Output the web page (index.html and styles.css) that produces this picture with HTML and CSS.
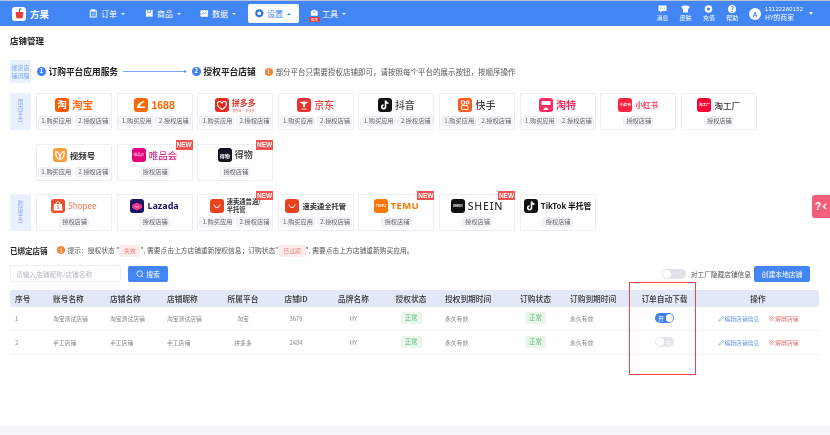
FILE: index.html
```html
<!DOCTYPE html>
<html lang="zh-CN">
<head>
<meta charset="utf-8">
<title>店铺管理</title>
<link rel="stylesheet" href="styles.css">
</head>
<body>
<div class="page">
  <header class="topbar">
    <div class="brand">
      <span class="brand-logo"><svg viewBox="0 0 14 14" width="11" height="11"><path d="M2 5h10l-1 8H3z" fill="#e8413c"/><path d="M7 5V1.500h2.500" fill="none" stroke="#2e9b4f" stroke-width="1.500"/></svg></span>
      <span class="brand-name">方果</span>
    </div>
    <nav class="nav">
      <a class="nav-item n1"><svg class="nav-ico" viewBox="0 0 10 10"><path d="M1.500 2h7v7.500h-7z" fill="none" stroke="#fff" stroke-width="1.200"/><path d="M3 .5h4v2H3zM3.200 5h3.600M3.200 7h3.600" fill="#fff" stroke="#fff" stroke-width=".8"/></svg>订单<i class="caret"></i></a>
      <a class="nav-item n2"><svg class="nav-ico" viewBox="0 0 10 10"><path d="M1 1h8v8H1z" fill="#fff"/><path d="M3.200 1v3h3.600V1" fill="none" stroke="#4285f4" stroke-width=".9"/></svg>商品<i class="caret"></i></a>
      <a class="nav-item n3"><svg class="nav-ico" viewBox="0 0 10 10"><rect x=".5" y="1.500" width="9" height="7.500" rx="1" fill="#fff"/><path d="M2 6.500l2-2 1.500 1L8 3.200" fill="none" stroke="#4285f4" stroke-width=".9"/></svg>数据<i class="caret"></i></a>
      <a class="nav-item active"><svg class="nav-ico" viewBox="0 0 10 10"><circle cx="5" cy="5" r="3.300" fill="none" stroke="#2f6fd8" stroke-width="2.200"/><circle cx="5" cy="5" r="4.600" fill="none" stroke="#2f6fd8" stroke-width=".9" stroke-dasharray="1.500 .9"/></svg>设置<i class="caret up"></i></a>
      <a class="nav-item n5"><span class="tool-ico"><svg class="nav-ico" viewBox="0 0 10 10"><path d="M5 .5L9 2.500V8H1V2.500z" fill="#fff"/><path d="M3.500 3.500h3" stroke="#4285f4" stroke-width=".9"/></svg><b class="tool-badge">限免</b></span>工具<i class="caret"></i></a>
    </nav>
    <div class="top-actions">
      <a class="act"><svg viewBox="0 0 10 9" class="act-ico"><path d="M.5.500h9v6.300H4.500L2.500 8.800V6.800h-2z" fill="#fff"/><path d="M2.500 3.500h5" stroke="#4285f4" stroke-dasharray="1 1"/></svg>消息</a>
      <a class="act"><svg viewBox="0 0 10 9" class="act-ico"><path d="M3 .5h4l2.800 1.600-1 2.200-1-.5v4.700H2.200V3.800l-1 .5-1-2.200z" fill="#fff"/></svg>皮肤</a>
      <a class="act"><svg viewBox="0 0 10 9" class="act-ico"><circle cx="5" cy="4.500" r="4.200" fill="#fff"/><circle cx="5" cy="4.500" r="1.800" fill="#4285f4"/></svg>充值</a>
      <a class="act"><span class="help-ico">?</span>帮助</a>
      <div class="user">
        <span class="avatar">A</span>
        <div class="user-text"><span class="phone">13122280152</span><span class="uname">HY的商家</span></div>
        <i class="caret user-caret"></i>
      </div>
    </div>
  </header>

  <main class="main">
    <h1 class="title">店铺管理</h1>

    <div class="flow">
      <div class="side side-flow">绑定店铺流程</div>
      <span class="num">1</span><span class="flow-name">订购平台应用服务</span>
      <svg class="flow-arrow" viewBox="0 0 64 5" width="64" height="5"><path d="M0 2.500h62" stroke="#5b8ff0" stroke-width=".8"/><path d="M64 2.500L61 1v3z" fill="#5b8ff0"/></svg>
      <span class="num">2</span><span class="flow-name">授权平台店铺</span>
      <span class="info"><i>!</i></span>
      <span class="flow-tip">部分平台只需要授权店铺即可，请按照每个平台的展示按钮，按顺序操作</span>
    </div>

    <section class="platforms">
      <div class="side">国内平台</div>
      <div class="cards">
        <div class="card"><div class="logo"><span class="ico i-tb">淘</span><span class="lt t-tb">淘宝</span></div><div class="btns"><span class="btn">1.购买应用</span><span class="btn">2.授权店铺</span></div></div>
        <div class="card"><div class="logo"><span class="ico i-1688"><svg viewBox="0 0 14 14"><path d="M3 10C3 6 6 3.500 10.500 3L9 5C7 5.500 6 7 6 8.500h5V10z" fill="#fff"/></svg></span><span class="lt t-1688">1688</span></div><div class="btns"><span class="btn">1.购买应用</span><span class="btn">2.授权店铺</span></div></div>
        <div class="card"><div class="logo"><span class="ico i-pdd"><svg viewBox="0 0 14 14"><path d="M7 11.500C3 9 2 7 2.500 5 3.200 3 6 3 7 5c1-2 3.800-2 4.500 0C12 7 11 9 7 11.500z" fill="none" stroke="#fff" stroke-width="1.200"/></svg></span><span class="lt-stack"><span class="lt t-pdd">拼多多</span><small class="t-pdd-sub">拼多宝 · 开多多</small></span></div><div class="btns"><span class="btn">1.购买应用</span><span class="btn">2.授权店铺</span></div></div>
        <div class="card"><div class="logo"><span class="ico i-jd"><svg viewBox="0 0 14 14"><path d="M2.500 4.500C5 3 9 3 11.500 4.500L8 6v3H6V6z" fill="#fff"/><path d="M4.500 11h5" stroke="#fff" stroke-width=".9"/></svg></span><span class="lt t-jd">京东</span></div><div class="btns"><span class="btn">1.购买应用</span><span class="btn">2.授权店铺</span></div></div>
        <div class="card"><div class="logo"><span class="ico i-dy"><svg viewBox="0 0 14 14"><path d="M7.500 2.500v6.300a1.900 1.900 0 1 1-1.900-1.900M7.500 2.500c.3 1.700 1.300 2.600 3 2.800" fill="none" stroke="#fff" stroke-width="1.500"/></svg></span><span class="lt t-dark">抖音</span></div><div class="btns"><span class="btn">1.购买应用</span><span class="btn">2.授权店铺</span></div></div>
        <div class="card"><div class="logo"><span class="ico i-ks"><svg viewBox="0 0 14 14"><g fill="none" stroke="#fff" stroke-width="1.100"><circle cx="5" cy="4.500" r="1.800"/><circle cx="9.500" cy="4.500" r="1.500"/><rect x="3.500" y="7.500" width="6.500" height="4" rx="1"/></g></svg></span><span class="lt t-dark">快手</span></div><div class="btns"><span class="btn">1.购买应用</span><span class="btn">2.授权店铺</span></div></div>
        <div class="card"><div class="logo"><span class="ico i-tt"><svg viewBox="0 0 14 14"><path d="M2.500 3h9v4h-9z" fill="#fff"/><path d="M4.500 12a2.500 2.500 0 0 1 5 0z" fill="#fff"/></svg></span><span class="lt t-tt">淘特</span></div><div class="btns"><span class="btn">1.购买应用</span><span class="btn">2.授权店铺</span></div></div>
        <div class="card"><div class="logo"><span class="ico i-xhs">小红书</span><span class="lt t-xhs">小红书</span></div><div class="btns"><span class="btn">授权店铺</span></div></div>
        <div class="card"><div class="logo"><span class="ico i-tgc">淘工厂</span><span class="lt t-tgc">淘工厂</span></div><div class="btns"><span class="btn">授权店铺</span></div></div>
        <div class="card"><div class="logo"><span class="ico i-sph"><svg viewBox="0 0 14 14"><path d="M3 3.500c2 0 3.500 2.500 4 7 .5-4.500 2-7 4-7 .5 3-.5 7-2.500 7.500-1 .3-2 .3-3 0C3.500 10.500 2.500 6.500 3 3.500z" fill="none" stroke="#fff" stroke-width="1.200"/></svg></span><span class="lt t-sph">视频号</span></div><div class="btns"><span class="btn">1.购买应用</span><span class="btn">2.授权店铺</span></div></div>
        <div class="card"><span class="new">NEW</span><div class="logo"><span class="ico i-vip">唯品会</span><span class="lt t-vip">唯品会</span></div><div class="btns"><span class="btn">授权店铺</span></div></div>
        <div class="card"><span class="new">NEW</span><div class="logo"><span class="ico i-dw">得物</span><span class="lt t-dw">得物</span></div><div class="btns"><span class="btn">授权店铺</span></div></div>
      </div>
    </section>

    <section class="platforms cross">
      <div class="side">跨境平台</div>
      <div class="cards">
        <div class="card"><div class="logo"><span class="ico i-sp"><svg viewBox="0 0 14 14"><path d="M3 5h8l.5 6.500h-9z" fill="#fff"/><path d="M5 5c0-3 4-3 4 0" fill="none" stroke="#fff"/><path d="M8 7c-1-.7-2-.3-1.800.4S8.200 8.300 8 9c-.3.700-1.300.6-2 .1" fill="none" stroke="#ee4d2d" stroke-width=".7"/></svg></span><span class="lt t-sp">Shopee</span></div><div class="btns"><span class="btn">授权店铺</span></div></div>
        <div class="card"><div class="logo"><span class="ico i-lz"><svg viewBox="0 0 14 14"><path d="M7 3.500L12 6v3l-5 2.500L2 9V6z" fill="#f0358b"/><path d="M5 7c1 1.500 3 1.500 4 0" fill="none" stroke="#fff" stroke-width=".7"/></svg></span><span class="lt t-lz">Lazada</span></div><div class="btns"><span class="btn">授权店铺</span></div></div>
        <div class="card"><span class="new">NEW</span><div class="logo logo-tight"><span class="ico i-ae"><svg viewBox="0 0 14 14"><path d="M4 5.500c.5 4 5.500 4 6 0" fill="none" stroke="#fff" stroke-width="1"/></svg></span><span class="lt t-ae2">速卖通普通/<br>半托管</span></div><div class="btns"><span class="btn">1.购买应用</span><span class="btn">2.授权店铺</span></div></div>
        <div class="card"><div class="logo"><span class="ico i-ae"><svg viewBox="0 0 14 14"><path d="M4 5.500c.5 4 5.500 4 6 0" fill="none" stroke="#fff" stroke-width="1"/></svg></span><span class="lt t-ae">速卖通全托管</span></div><div class="btns"><span class="btn">1.购买应用</span><span class="btn">2.授权店铺</span></div></div>
        <div class="card"><span class="new">NEW</span><div class="logo"><span class="ico i-temu">TEMU</span><span class="lt t-temu">TEMU</span></div><div class="btns"><span class="btn">授权店铺</span></div></div>
        <div class="card"><span class="new">NEW</span><div class="logo"><span class="ico i-shein">SHEIN</span><span class="lt t-shein">SHEIN</span></div><div class="btns"><span class="btn">授权店铺</span></div></div>
        <div class="card"><div class="logo"><span class="ico i-dy"><svg viewBox="0 0 14 14"><path d="M7.500 2.500v6.300a1.900 1.900 0 1 1-1.900-1.900M7.500 2.500c.3 1.700 1.300 2.600 3 2.800" fill="none" stroke="#fff" stroke-width="1.500"/></svg></span><span class="lt t-tk">TikTok 半托管</span></div><div class="btns"><span class="btn">授权店铺</span></div></div>
      </div>
    </section>

    <div class="bound-head">
      <h2 class="bound-title">已绑定店铺</h2>
      <span class="info info-b"><i>!</i></span>
      <span class="bound-tip">提示：授权状态 "<em class="chip chip-a">失效</em>", 需要点击上方店铺重新授权信息；订购状态"<em class="chip chip-b">已过期</em>", 需要点击上方店铺重新购买应用。</span>
    </div>

    <div class="toolbar">
      <input class="search" type="text" placeholder="请输入店铺昵称/店铺名称">
      <a class="primary search-btn"><svg viewBox="0 0 10 10" width="8" height="8"><circle cx="4.600" cy="4.600" r="3.500" fill="none" stroke="#fff" stroke-width="1"/><path d="M7 7l2 2" stroke="#fff" stroke-width="1"/></svg>搜索</a>
      <span class="toolbar-right">
        <span class="hide-switch"><i></i></span>
        <span class="hide-label">对工厂隐藏店铺信息</span>
        <a class="primary create-btn">创建本地店铺</a>
      </span>
    </div>

    <div class="table">
      <div class="row thead">
        <span>序号</span><span>账号名称</span><span>店铺名称</span><span>店铺昵称</span><span class="c">所属平台</span><span class="c">店铺ID</span><span class="c">品牌名称</span><span class="c">授权状态</span><span>授权到期时间</span><span class="c">订购状态</span><span>订购到期时间</span><span class="c">订单自动下载</span><span class="c">操作</span>
      </div>
      <div class="row tbody">
        <span>1</span><span>淘宝测试店铺</span><span>淘宝测试店铺</span><span>淘宝测试店铺</span><span class="c">淘宝</span><span class="c">3679</span><span class="c">HY</span><span class="c"><b class="ok">正常</b></span><span>永久有效</span><span class="c"><b class="ok">正常</b></span><span>永久有效</span><span class="c"><b class="sw on">开<i></i></b></span><span class="ops"><a class="edit"><svg viewBox="0 0 8 8" width="7" height="7"><path d="M1 7l.4-1.700L5.500 1.200l1.300 1.300L2.700 6.600z" fill="none" stroke="#5b8ff0" stroke-width=".6"/></svg>编辑店铺信息</a><a class="unbind"><svg viewBox="0 0 8 8" width="7" height="7"><path d="M1.500 4.500l3-3 2 2-3 3zM1 1l6 6" fill="none" stroke="#ef5350" stroke-width=".6"/></svg>解绑店铺</a></span>
      </div>
      <div class="row tbody">
        <span>2</span><span>手工店铺</span><span>手工店铺</span><span>手工店铺</span><span class="c">拼多多</span><span class="c">2484</span><span class="c">HY</span><span class="c"><b class="ok">正常</b></span><span>永久有效</span><span class="c"><b class="ok">正常</b></span><span>永久有效</span><span class="c"><b class="sw off"><i></i>关</b></span><span class="ops"><a class="edit"><svg viewBox="0 0 8 8" width="7" height="7"><path d="M1 7l.4-1.700L5.500 1.200l1.300 1.300L2.700 6.600z" fill="none" stroke="#5b8ff0" stroke-width=".6"/></svg>编辑店铺信息</a><a class="unbind"><svg viewBox="0 0 8 8" width="7" height="7"><path d="M1.500 4.500l3-3 2 2-3 3zM1 1l6 6" fill="none" stroke="#ef5350" stroke-width=".6"/></svg>解绑店铺</a></span>
      </div>
    </div>
  </main>
  <footer class="foot"></footer>
  <div class="redbox"></div>
  <div class="help-float"><span>?</span><svg viewBox="0 0 6 8" width="5" height="7"><path d="M5 1L1.500 4 5 7" fill="none" stroke="#fff" stroke-width="1.600"/></svg></div>
</div>
</body>
</html>
```
FILE: styles.css
```css
* { box-sizing: border-box; margin: 0; padding: 0; }
html, body { width: 830px; height: 435px; overflow: hidden; background: #fff; }
body { font-family: "Noto Sans CJK SC", "Liberation Sans", sans-serif; color: #333; }
a { text-decoration: none; display: inline-flex; }
i, em { font-style: normal; }
.page { position: relative; width: 830px; height: 435px; display: flex; flex-direction: column; border-top: 1px solid #b9c6de; filter: blur(.35px); }

.topbar { height: 25px; flex: none; background: #4285f4; display: flex; align-items: center; color: #fff; padding-left: 12px; }
.brand { display: flex; align-items: center; gap: 4px; width: 77px; flex: none; }
.brand-logo { width: 14px; height: 14px; background: #fff; border-radius: 3px; display: flex; align-items: center; justify-content: center; }
.brand-name { font-size: 9.500px; font-weight: 700; }
.nav { display: flex; align-items: center; font-size: 8px; }
.nav-item { display: flex; align-items: center; height: 19px; color: #fff; gap: 3.500px; }
.nav-ico { width: 8.500px; height: 8.500px; flex: none; display: block; }
.n1 { width: 56px; }
.n2 { width: 55px; }
.n3 { width: 48px; }
.active { width: 51px; background: #fff; color: #4285f4; border-radius: 2px; padding-left: 7px; margin-right: 11px; }
.caret { width: 0; height: 0; border: 2px solid transparent; border-top: 2.500px solid #fff; border-bottom: 0; margin-left: 0; }
.caret.up { border-top: 0; border-bottom: 2.500px solid #4285f4; }
.tool-ico { position: relative; display: block; }
.tool-badge { position: absolute; left: -1px; top: 7.500px; width: 11px; height: 5px; background: #e53935; border-radius: 2px; font-size: 3.500px; line-height: 5px; text-align: center; color: #fff; font-weight: 400; }

.top-actions { margin-left: auto; display: flex; align-items: center; }
.act { flex-direction: column; align-items: center; width: 23.400px; color: #fff; font-size: 6px; line-height: 8px; gap: 1px; }
.act-ico { width: 9px; height: 8px; display: block; }
.help-ico { width: 8px; height: 8px; border-radius: 50%; background: #fff; color: #4285f4; font-size: 7px; line-height: 8px; text-align: center; font-weight: 700; }
.user { display: flex; align-items: center; margin-left: 5px; margin-right: 17px; }
.avatar { width: 12px; height: 12px; border-radius: 50%; background: #fff; color: #4285f4; font-size: 6.500px; font-weight: 700; line-height: 12px; text-align: center; margin-right: 4px; }
.user-text { display: flex; flex-direction: column; width: 44px; }
.phone { font-size: 5.700px; line-height: 8px; letter-spacing: .3px; font-family: "Liberation Sans", sans-serif; }
.uname { font-size: 6.800px; line-height: 9px; }
.user-caret { border-width: 2.500px; border-top-width: 3px; margin-left: 0; }

.main { flex: 1; padding: 7px 10px 0; min-height: 0; }
.title { font-size: 8.500px; line-height: 14px; font-weight: 700; color: #222; }

.side { width: 21px; height: 100%; background: #eaf1fe; color: #7ca6ee; font-size: 5.400px; line-height: 5.800px; display: flex; align-items: center; justify-content: center; text-align: center; flex: none; padding: 0 7px; border-radius: 1px; }
.side-flow { height: 23px; padding: 0 1px; font-size: 6px; line-height: 8px; margin-right: 6px; }
.flow { display: flex; align-items: center; height: 23px; margin-top: 13px; }
.num { width: 8.500px; height: 8.500px; border-radius: 50%; background: #3f82f3; color: #fff; font-size: 6px; font-weight: 700; line-height: 8.500px; text-align: center; flex: none; margin-right: 3px; }
.flow-name { font-size: 8.700px; font-weight: 700; color: #222; white-space: nowrap; }
.flow-arrow { margin: 0 5px; flex: none; display: block; }
.info { width: 8px; height: 8px; border-radius: 50%; background: #f5863b; color: #fff; display: flex; align-items: center; justify-content: center; flex: none; margin: 0 3px 0 9px; font-size: 6px; font-weight: 700; }
.flow-tip { font-size: 7.500px; color: #555; white-space: nowrap; }

.platforms { display: flex; gap: 5px; margin-top: 10px; }
.platforms > .side { height: 37px; }
.cross { margin-top: 13.500px; }
.cards { display: grid; grid-template-columns: repeat(9, 76px); grid-auto-rows: 37px; gap: 13.500px 4.600px; }
.card { position: relative; border: 1px solid #eceef2; border-radius: 1px; background: #fff; display: flex; flex-direction: column; align-items: center; padding-top: 3px; }
.new { position: absolute; right: -1px; top: -4.500px; width: 17px; height: 9.500px; background: #f0524f; color: #fff; font: 700 6.500px/9.500px "Liberation Sans", sans-serif; text-align: center; }
.logo { height: 15px; display: flex; align-items: center; justify-content: center; gap: 3px; white-space: nowrap; }
.btns { display: flex; gap: 1.500px; margin-top: 4px; }
.btn { height: 10px; border: 1px solid #eef0f4; background: #f4f6f9; color: #666; font-size: 6.200px; line-height: 8px; padding: 0 2.500px; border-radius: 1.500px; white-space: nowrap; width: 35.500px; text-align: center; }
.btn:only-child { width: 30.500px; }
.ico { width: 14px; height: 14px; border-radius: 3px; flex: none; display: flex; align-items: center; justify-content: center; color: #fff; font-size: 3.600px; overflow: hidden; line-height: 1; text-align: center; }
.ico svg { width: 14px; height: 14px; display: block; }
.lt { font-size: 10px; font-weight: 700; line-height: 12px; }
.lt-stack { display: flex; flex-direction: column; align-items: center; height: 15px; justify-content: flex-start; }
.i-tb { background: #ff5a00; font-size: 9.500px; font-weight: 700; }
.t-tb { color: #ff6a1a; font-size: 10.500px; }
.i-1688 { background: #ff6a00; }
.t-1688 { color: #ff6a00; font-size: 10.500px; font-family: "Liberation Sans", sans-serif; }
.i-pdd { background: #e02e24; }
.t-pdd { color: #e02e24; font-size: 8px; line-height: 11.600px; flex: none; }
.t-pdd-sub { color: #e8675f; font-size: 3px; line-height: 4.400px; display: block; flex: none; }
.i-jd { background: #e9342f; }
.t-jd { color: #e9463f; font-weight: 500; }
.i-dy { background: #111; }
.t-dark { color: #444; font-size: 10px; font-weight: 500; }
.i-ks { background: #ff5a1f; }
.i-tt { background: #ff2a62; }
.t-tt { color: #f02a5c; }
.i-xhs { background: #ff2442; font-weight: 700; }
.t-xhs { color: #ff3d57; font-size: 7.500px; }
.i-tgc { background: #ff0036; font-weight: 700; }
.t-tgc { color: #333; font-size: 8.500px; font-weight: 500; }
.i-sph { background: #fa9d3b; }
.t-sph { color: #333; font-size: 8.500px; }
.i-vip { background: #e6007e; }
.t-vip { color: #e4398f; font-size: 9.500px; font-weight: 500; }
.i-dw { background: #17121f; font-size: 5px; font-weight: 700; }
.t-dw { color: #333; font-size: 9px; font-weight: 500; }
.i-sp { background: #ee4d2d; }
.t-sp { color: #f7845e; font: 500 8px/12px "Noto Sans", sans-serif; }
.i-lz { background: #1b1464; }
.t-lz { color: #1b1464; font: 700 9px/12px "Noto Sans", sans-serif; }
.i-ae { background: #e8431f; }
.t-ae2 { color: #333; font-size: 6.300px; line-height: 7.500px; }
.t-ae { color: #333; font-size: 7.300px; }
.i-temu { background: #fb7701; font-weight: 700; }
.t-temu { color: #fb7701; font: 700 9.500px/12px "Noto Sans", sans-serif; letter-spacing: .3px; }
.i-shein { background: #111; font-size: 3.200px; font-weight: 700; }
.t-shein { color: #333; font: 500 10.500px/12px "Noto Sans", sans-serif; letter-spacing: .8px; }
.t-tk { color: #111; font-size: 7.800px; }

.bound-head { display: flex; align-items: center; height: 12px; margin-top: 13px; }
.bound-title { font-size: 7.500px; font-weight: 700; color: #222; width: 38px; flex: none; white-space: nowrap; }
.info-b { margin: 0 2.500px 0 9px; }
.bound-tip { font-size: 6.750px; color: #555; white-space: nowrap; line-height: 12px; }
.chip { display: inline-block; font-size: 5.700px; border-radius: 1.500px; text-align: center; line-height: 12px; color: #f47b74; background: #fdecec; }
.chip-a { width: 21px; }
.chip-b { width: 27px; }

.toolbar { display: flex; align-items: center; height: 17px; margin-top: 9px; padding-right: 10px; }
.search { width: 111px; height: 17px; border: 1px solid #eceef2; border-radius: 2px; padding: 0 5px; font: 6.700px "Noto Sans CJK SC", sans-serif; outline: 0; }
.search::placeholder { color: #b5b8bf; }
.primary { background: #4285f4; color: #fff; height: 16px; align-items: center; justify-content: center; border-radius: 2px; font-size: 6.800px; flex: none; }
.search-btn { width: 40px; gap: 2px; margin-left: 7px; }
.toolbar-right { margin-left: auto; display: flex; align-items: center; }
.hide-switch { width: 24px; height: 10px; background: #dfe2e8; border-radius: 5px; display: block; padding: 1px; }
.hide-switch i { display: block; width: 8px; height: 8px; background: #fff; border-radius: 50%; }
.hide-label { font-size: 6.700px; color: #555; margin: 0 3px 0 5px; white-space: nowrap; }
.create-btn { width: 56px; }

.table { margin-top: 8px; width: 809px; }
.row { display: grid; grid-template-columns: 38px 57px 57px 57px 48px 58px 57px 58px 66px 59px 67px 65px 122px; align-items: center; }
.row > span { padding-left: 5px; white-space: nowrap; }
.row > .c { padding-left: 0; text-align: center; }
.thead { height: 16.500px; background: #e2e8f7; border-radius: 2px; font-size: 7.700px; font-weight: 500; color: #333; }
.tbody { height: 24px; border-bottom: 1px solid #f1f2f5; font-size: 5.800px; color: #888; }
.ok { display: inline-block; width: 21px; height: 12px; line-height: 12px; background: #e9f6ec; color: #62b97a; border-radius: 2px; font-size: 6.300px; font-weight: 400; }
.sw { display: inline-flex; width: 19px; height: 10px; border-radius: 5px; align-items: center; font-size: 6px; font-weight: 400; color: #fff; padding: 0 1px; justify-content: space-between; vertical-align: middle; }
.sw i { width: 7.500px; height: 7.500px; background: #fff; border-radius: 50%; }
.sw.on { background: #3f7df0; padding-left: 3px; }
.sw.off { background: #e3e5e9; padding-right: 3px; }
.row > .ops { display: flex; justify-content: center; gap: 9px; padding: 0; font-size: 5.800px; }
.edit { color: #6c97ee; align-items: center; }
.unbind { color: #ef6a66; align-items: center; }

.foot { height: 9px; flex: none; background: #f5f6fa; }
.redbox { position: absolute; left: 628.500px; top: 280.500px; width: 67.500px; height: 93.500px; border: 1.500px solid #f8443f; }
.help-float { position: absolute; right: 0; top: 194px; width: 18px; height: 23px; background: #f0607a; border-radius: 3px 0 0 3px; display: flex; align-items: center; padding-left: 3px; color: #fff; font: 700 10px "Liberation Sans", sans-serif; gap: 1px; }
```
